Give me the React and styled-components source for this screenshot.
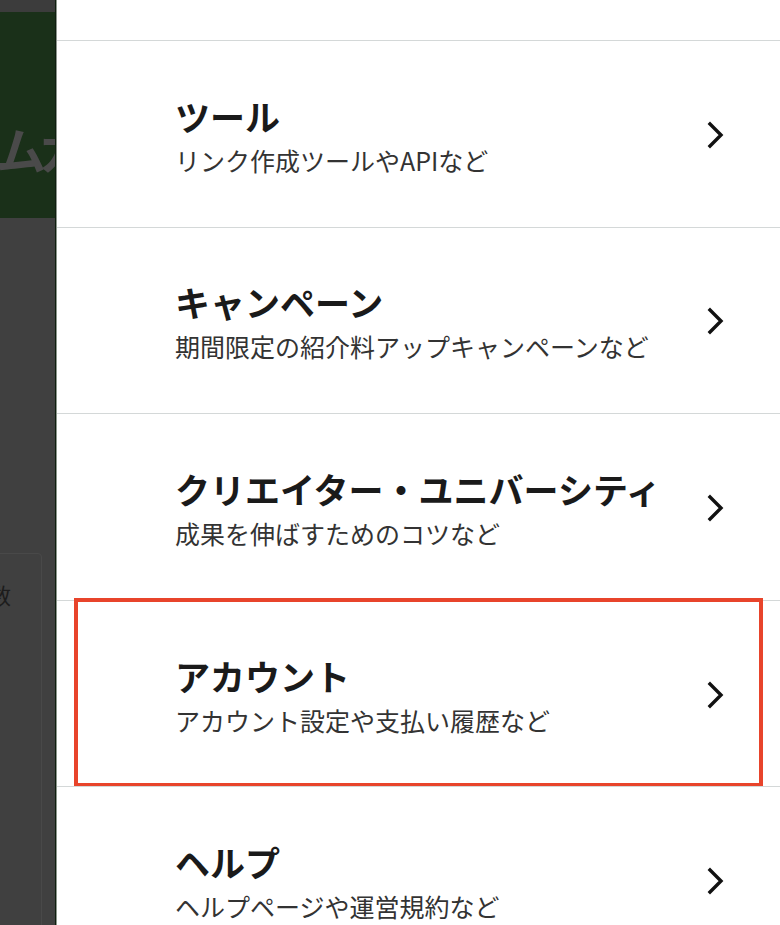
import styled, { createGlobalStyle } from 'styled-components';

const GlobalStyle = createGlobalStyle`
  html, body {
    margin: 0;
    padding: 0;
    background: #ffffff;
  }
  body {
    font-family: "Noto Sans CJK JP", "Noto Sans", sans-serif;
    overflow: hidden;
  }
`;

const StyledPage = styled.div`
  display: flex;
  width: 780px;
  height: 925px;
  overflow: hidden;
`;

const StyledBackdrop = styled.div`
  display: flex;
  flex-direction: column;
  width: 55px;
  flex-shrink: 0;
  overflow: hidden;
  border-right: 1px solid #0f1e0f;
`;

const StyledTopBar = styled.div`
  height: 12px;
  flex-shrink: 0;
  background: #3c3c3c;
`;

const StyledHero = styled.div`
  height: 206px;
  flex-shrink: 0;
  background: #1a3019;
  overflow: hidden;
  padding-top: 106px;
  box-sizing: border-box;
`;

const StyledHeroText = styled.div`
  margin-left: -4px;
  font-size: 50px;
  line-height: 60px;
  font-weight: 700;
  color: #4a4a4a;
  white-space: nowrap;
  letter-spacing: -8px;
`;

const StyledLower = styled.div`
  flex: 1;
  min-height: 0;
  overflow: hidden;
  background: #404040;
  padding-top: 335px;
`;

const StyledCard = styled.div`
  height: 400px;
  margin-left: -12px;
  width: 54px;
  border: 1px solid #494949;
  border-radius: 4px;
  padding-top: 24px;
  box-sizing: border-box;
  font-size: 22px;
  color: #1c1c1c;
  white-space: nowrap;
  overflow: hidden;
`;

const StyledDrawer = styled.div`
  flex: 1;
  background: #ffffff;
  border-left: 1px solid #8d968d;
  padding-top: 40px;
`;

const StyledItem = styled.div`
  position: relative;
  display: flex;
  align-items: center;
  height: 186.6px;
  box-sizing: border-box;
  border-top: 1px solid #d4d8d8;
  padding: 2px 54px 0 118px;

  ${(props) =>
    props.highlighted &&
    `
    &::after {
      content: '';
      position: absolute;
      top: -3px;
      bottom: -1px;
      left: 17px;
      right: 17px;
      border: 4px solid #e8442b;
      pointer-events: none;
    }
  `}
`;

const StyledText = styled.div`
  flex: 1;
  display: flex;
  flex-direction: column;
`;

const StyledTitle = styled.div`
  font-size: 35px;
  font-weight: 700;
  line-height: 46px;
  margin-bottom: 4px;
  color: #1a1a1a;
`;

const StyledSubtitle = styled.div`
  font-size: 25px;
  font-weight: 400;
  line-height: 34px;
  color: #333333;
`;

const StyledChevron = styled.svg`
  width: 20px;
  height: 28px;
  flex-shrink: 0;
`;

const items = [
  { title: 'ツール', sub: 'リンク作成ツールやAPIなど' },
  { title: 'キャンペーン', sub: '期間限定の紹介料アップキャンペーンなど' },
  { title: 'クリエイター・ユニバーシティ', sub: '成果を伸ばすためのコツなど' },
  { title: 'アカウント', sub: 'アカウント設定や支払い履歴など', highlighted: true },
  { title: 'ヘルプ', sub: 'ヘルプページや運営規約など' },
];

function Chevron() {
  return (
    <StyledChevron viewBox="0 0 20 28">
      <polyline
        points="4,3 15,14 4,25"
        fill="none"
        stroke="#111111"
        strokeWidth="3.4"
        strokeLinecap="square"
        strokeLinejoin="miter"
      />
    </StyledChevron>
  );
}

export default function App() {
  return (
    <>
      <GlobalStyle />
      <StyledPage>
        <StyledBackdrop>
          <StyledTopBar />
          <StyledHero>
            <StyledHeroText>ムカ</StyledHeroText>
          </StyledHero>
          <StyledLower>
            <StyledCard>数</StyledCard>
          </StyledLower>
        </StyledBackdrop>
        <StyledDrawer>
          {items.map((item) => (
            <StyledItem key={item.title} highlighted={item.highlighted}>
              <StyledText>
                <StyledTitle>{item.title}</StyledTitle>
                <StyledSubtitle>{item.sub}</StyledSubtitle>
              </StyledText>
              <Chevron />
            </StyledItem>
          ))}
        </StyledDrawer>
      </StyledPage>
    </>
  );
}
